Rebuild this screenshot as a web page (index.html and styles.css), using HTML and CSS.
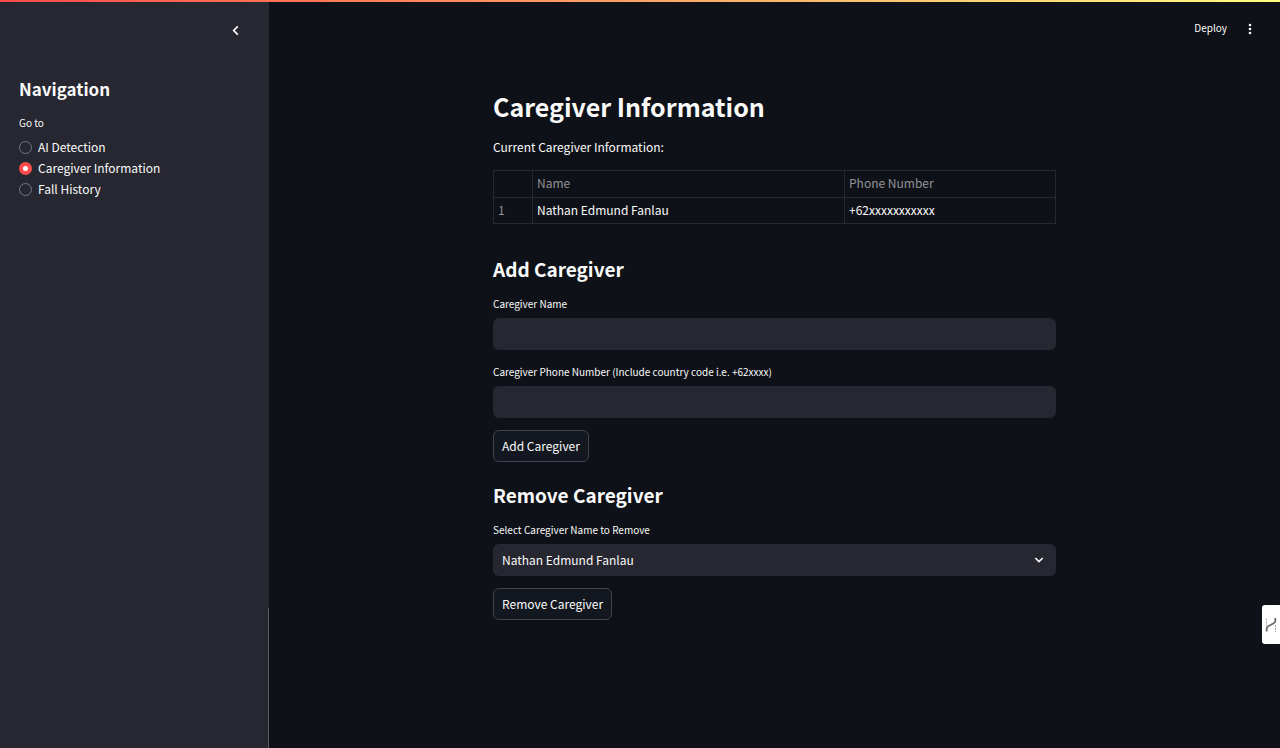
FILE: index.html
```html
<!DOCTYPE html>
<html lang="en">
<head>
<meta charset="utf-8">
<meta name="viewport" content="width=device-width, initial-scale=1">
<title>Caregiver Information</title>
<link rel="stylesheet" href="styles.css">
</head>
<body>
<div class="decoration"></div>
<div class="app">
  <aside class="sidebar">
    <div class="sidebar-top">
      <button class="icon-button" type="button" aria-label="Collapse sidebar">
        <svg width="16" height="16" viewBox="0 0 16 16" fill="none" stroke="currentColor" stroke-width="1.7"><path d="M9.8 4.3 5.7 8.5l4.1 4.2"/></svg>
      </button>
    </div>
    <h2 class="sidebar-title">Navigation</h2>
    <fieldset class="nav">
      <legend class="nav-legend">Go to</legend>
      <label class="nav-option"><input class="nav-radio" type="radio" name="page">AI Detection</label>
      <label class="nav-option"><input class="nav-radio" type="radio" name="page" checked>Caregiver Information</label>
      <label class="nav-option"><input class="nav-radio" type="radio" name="page">Fall History</label>
    </fieldset>
  </aside>
  <div class="page">
    <header class="toolbar">
      <button class="deploy" type="button">Deploy</button>
      <button class="icon-button" type="button" aria-label="Menu">
        <svg width="16" height="16" viewBox="0 0 16 16" fill="currentColor"><circle cx="8" cy="4" r="1.3"/><circle cx="8" cy="8" r="1.3"/><circle cx="8" cy="12" r="1.3"/></svg>
      </button>
    </header>
    <main class="content">
      <h1 class="title">Caregiver Information</h1>
      <p class="intro">Current Caregiver Information:</p>
      <table class="table">
        <thead>
          <tr><th class="col-index"></th><th class="col-name" scope="col">Name</th><th scope="col">Phone Number</th></tr>
        </thead>
        <tbody>
          <tr><th scope="row">1</th><td>Nathan Edmund Fanlau</td><td>+62xxxxxxxxxxx</td></tr>
        </tbody>
      </table>
      <form class="section section-add">
        <h2 class="heading">Add Caregiver</h2>
        <div class="field">
          <label class="label" for="name">Caregiver Name</label>
          <input class="control" id="name" type="text">
        </div>
        <div class="field">
          <label class="label" for="phone">Caregiver Phone Number (Include country code i.e. +62xxxx)</label>
          <input class="control" id="phone" type="tel">
        </div>
        <button class="button" type="button">Add Caregiver</button>
      </form>
      <form class="section">
        <h2 class="heading">Remove Caregiver</h2>
        <div class="field">
          <label class="label" for="remove">Select Caregiver Name to Remove</label>
          <div class="select">
            <select class="control" id="remove"><option>Nathan Edmund Fanlau</option></select>
            <svg class="chevron" width="16" height="16" viewBox="0 0 16 16" fill="none" stroke="currentColor" stroke-width="1.6"><path d="M4.3 6 8 9.6 11.7 6"/></svg>
          </div>
        </div>
        <button class="button" type="button">Remove Caregiver</button>
      </form>
    </main>
  </div>
</div>
<button class="side-tab" type="button" aria-label="Open extension">
  <svg width="12" height="16" viewBox="0 0 12 16" fill="none" stroke="#6b6b6b"><path d="M1.7 14.5V11.500Q1.700 10 3.200 9.200L8.800 6.300Q10.300 5.500 10.300 4V1" stroke-width="1.8"/><path d="M1.500 1.500v7M10.500 8v7" stroke="#a0a0a0" stroke-dasharray="2 1"/></svg>
</button>
</body>
</html>
```
FILE: styles.css
```css
* {
  box-sizing: border-box;
}

body {
  margin: 0;
  background: #0e1117;
  color: #fafafa;
  font-family: "Noto Sans CJK SC", "Noto Sans", sans-serif;
  font-size: 12px;
  line-height: 20px;
}

h1,
h2,
p {
  margin: 0;
}

button,
input,
select {
  font: inherit;
  color: inherit;
}

button {
  cursor: pointer;
}

.decoration {
  position: fixed;
  inset: 0 0 auto;
  z-index: 2;
  height: 2px;
  background: linear-gradient(90deg, #ff4b4b, #fffd80);
}

.app {
  display: flex;
  min-height: 100vh;
}

.sidebar {
  position: relative;
  flex: 0 0 269px;
  padding: 20px 19px;
  background: #262730;
}

.sidebar::after {
  content: "";
  position: absolute;
  top: 608px;
  right: 0;
  bottom: 0;
  width: 1px;
  background: #5b5c63;
}

.sidebar-top {
  display: flex;
  justify-content: flex-end;
  padding-right: 4px;
}

.icon-button {
  display: flex;
  padding: 2px;
  border: 0;
  background: none;
}

.sidebar-title {
  margin-top: 37px;
  font-size: 17px;
  line-height: 24px;
}

.nav {
  margin: 0;
  padding: 0;
  border: 0;
}

.nav-legend {
  padding: 14px 0 6px;
  font-size: 10px;
  line-height: 16px;
}

.nav-option {
  display: flex;
  align-items: center;
  gap: 6px;
  height: 20px;
}

.nav-option + .nav-option {
  margin-top: 1px;
}

.nav-radio {
  appearance: none;
  width: 13px;
  height: 13px;
  margin: 0;
  border: 1px solid #77787f;
  border-radius: 50%;
}

.nav-radio:checked {
  border: 4px solid #ff4b4b;
  background: #fff;
}

.page {
  flex: 1;
  min-width: 0;
}

.toolbar {
  display: flex;
  align-items: center;
  justify-content: flex-end;
  gap: 13px;
  height: 58px;
  padding-right: 20px;
}

.deploy {
  padding: 0 0 2px;
  border: 0;
  background: none;
  font-size: 10px;
}

.content {
  max-width: 563px;
  margin: 0 auto;
  padding: 28px 0 80px;
}

.title {
  font-size: 25px;
  line-height: 40px;
}

.intro {
  margin: 11px 0 13px;
}

.table {
  width: 100%;
  border-collapse: collapse;
  table-layout: fixed;
}

.table th,
.table td {
  height: 26px;
  padding: 0 4px 2px;
  border: 1px solid #26292e;
  font-weight: 400;
  text-align: left;
}

.table thead th {
  height: 27px;
}

.table th {
  color: #929396;
}

.table .col-index {
  width: 39px;
}

.table .col-name {
  width: 312px;
}

.section {
  margin-top: 19px;
}

.section-add {
  margin-top: 31px;
}

.heading {
  margin-bottom: 13px;
  font-size: 19px;
  line-height: 28px;
}

.field + .field {
  margin-top: 14px;
}

.label {
  display: block;
  margin-bottom: 6px;
  font-size: 10px;
  line-height: 16px;
}

.control {
  display: block;
  width: 100%;
  height: 32px;
  padding: 0 9px;
  border: 0;
  border-radius: 6px;
  background: #262730;
  appearance: none;
}

.select {
  position: relative;
}

.chevron {
  position: absolute;
  top: 8px;
  right: 9px;
  pointer-events: none;
}

.button {
  height: 32px;
  margin-top: 12px;
  padding: 0 8px;
  border: 1px solid #41444c;
  border-radius: 6px;
  background: #131720;
}

.side-tab {
  position: fixed;
  top: 605px;
  right: 0;
  display: flex;
  align-items: center;
  width: 18px;
  height: 39px;
  padding: 0 3px;
  border: 0;
  border-radius: 3px 0 0 3px;
  background: #fff;
}
```
